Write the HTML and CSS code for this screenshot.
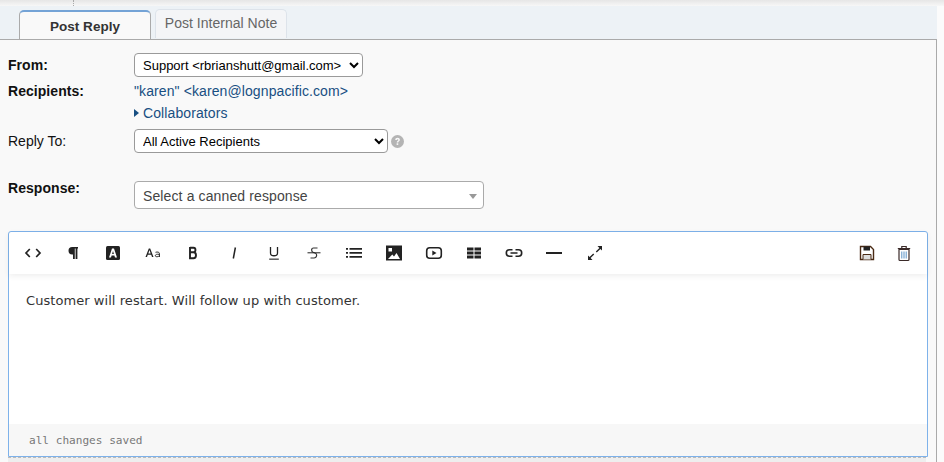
FILE: index.html
```html
<!DOCTYPE html>
<html lang="en">
<head>
<meta charset="utf-8">
<title>Post Reply</title>
<link rel="stylesheet" href="styles.css">
</head>
<body>
<div class="topstrip"><span class="grip"></span></div>
<div class="tabs">
  <div class="tab active">Post Reply</div>
  <div class="tab">Post Internal Note</div>
</div>
<main class="panel">
  <div class="row row-from">
    <label class="lbl strong">From:</label>
    <select class="sel sel-from"><option>Support &lt;rbrianshutt@gmail.com&gt;</option></select>
  </div>
  <div class="row row-rec">
    <label class="lbl strong">Recipients:</label>
    <div class="rec">
      <a class="link">"karen" &lt;karen@lognpacific.com&gt;</a>
      <a class="link collab"><span class="tri"></span>Collaborators</a>
    </div>
  </div>
  <div class="row row-reply">
    <label class="lbl">Reply To:</label>
    <select class="sel sel-reply"><option>All Active Recipients</option></select>
    <svg class="help" viewBox="0 0 24 24" width="13" height="13"><circle cx="12" cy="12" r="12" fill="#b4b4b4"/><path d="M7.800 9.200c0-2.400 1.900-3.900 4.300-3.900 2.500 0 4.300 1.500 4.300 3.600 0 3-3 2.900-3 5.100h-2.800c0-3.500 3-3.400 3-5 0-.7-.6-1.200-1.400-1.200-.9 0-1.500.6-1.500 1.500z" fill="#f9f9f9"/><rect x="10.400" y="15.300" width="3" height="3" fill="#f9f9f9"/></svg>
  </div>
  <div class="row row-resp">
    <label class="lbl strong">Response:</label>
    <div class="canned"><span>Select a canned response</span><i class="caret"></i></div>
  </div>
  <section class="editor">
    <div class="toolbar">
      <svg class="ic" viewBox="0 0 18 18"><path d="M5.800 5 2 9l3.800 4M12.200 5 16 9l-3.800 4" fill="none" stroke="#222" stroke-width="1.700"/></svg>
      <svg class="ic" viewBox="0 0 18 18"><path d="M14 3H8.200a3.700 3.700 0 0 0 0 7.400H9V15h1.800V4.500h.8V15H13.400V4.500H14z" fill="#222"/></svg>
      <svg class="ic" viewBox="0 0 18 18"><rect x="2" y="2" width="14" height="14" rx="1.500" fill="#222"/><path d="M5 13.500 8 4.500h2l3 9h-2l-.6-2H7.600L7 13.500zM8.100 10h1.800L9 7z" fill="#fff"/></svg>
      <svg class="ic" viewBox="0 0 18 18"><path d="M1.500 13 4.800 4.500h1.400L9.500 13H8l-.8-2.200H3.800L3 13zM4.300 9.500h2.400L5.500 6.100z" fill="#222"/><path d="M11.500 8.300c1.900-.6 4-.3 4 1.500V13M15.500 10.400c-2.800-.5-4.200.2-4.200 1.300 0 1.400 2.900 1.400 4.200-.1" fill="none" stroke="#333" stroke-width="1"/></svg>
      <svg class="ic" viewBox="0 0 18 18"><path d="M6 3.800h3.500c2.600 0 2.600 4.400 0 4.500H6M9.500 8.300c3.300 0 3.300 5.800 0 5.900H6V3" fill="none" stroke="#222" stroke-width="1.900"/></svg>
      <svg class="ic" viewBox="0 0 18 18"><path d="M10.400 3.500 8.300 14.500" fill="none" stroke="#222" stroke-width="1.500"/></svg>
      <svg class="ic" viewBox="0 0 18 18"><path d="M5.500 3v6.200c0 3.400 7 3.400 7 0V3" fill="none" stroke="#222" stroke-width="1.300"/><rect x="4.200" y="14.600" width="9.600" height="1.100" fill="#222"/></svg>
      <svg class="ic" viewBox="0 0 18 18"><path d="M12.500 4H8.500C6 4 6 8 8.500 8.500L10 9c2.500.6 2 5-1 5H5.500" fill="none" stroke="#333" stroke-width="1.200"/><rect x="2.500" y="8.300" width="13" height="1" fill="#222"/></svg>
      <svg class="ic" viewBox="0 0 18 18"><path d="M1 4h2v1.700H1zM1 8h2v1.700H1zM1 12h2v1.700H1zM4.500 4H17v1.700H4.500zM4.500 8H17v1.700H4.500zM4.500 12H17v1.700H4.500z" fill="#222"/></svg>
      <svg class="ic" viewBox="0 0 18 18"><path d="M1 1.500h16v15H1zM3.500 4v3.500H7V4zM3 15h12l-3.500-6-2.500 3.500-1.700-2z" fill="#222" fill-rule="evenodd"/></svg>
      <svg class="ic" viewBox="0 0 18 18"><rect x="1.700" y="3.700" width="14.600" height="10.600" rx="3" fill="none" stroke="#222" stroke-width="1.600"/><path d="M7.300 6.500 11.500 9l-4.200 2.500z" fill="#222"/></svg>
      <svg class="ic" viewBox="0 0 18 18"><path d="M2 3.500h6.500v3H2zM9.500 3.500H16v3H9.500zM2 7.500h6.500v3H2zM9.500 7.500H16v3H9.500zM2 11.500h6.500v3H2zM9.500 11.500H16v3H9.500z" fill="#222"/></svg>
      <svg class="ic" viewBox="0 0 18 18"><path d="M7.500 5.800h-3a3.200 3.200 0 0 0 0 6.400h3M10.500 5.800h3a3.200 3.200 0 0 1 0 6.400h-3M5.500 9h7" fill="none" stroke="#222" stroke-width="1.600"/></svg>
      <svg class="ic" viewBox="0 0 18 18"><rect x="1" y="8" width="16" height="2" fill="#222"/></svg>
      <svg class="ic" viewBox="0 0 18 18"><path d="M11.500 2H16v4.500l-1.600-1.600-3.600 3.600-1-1 3.600-3.600zM6.500 16H2v-4.500l1.600 1.600 3.600-3.600 1 1-3.600 3.600z" fill="#222"/></svg>
      <span class="spacer"></span>
      <svg class="ic ic-save" viewBox="0 0 18 18"><path d="M2.500 2.500h10l3 3v10h-13z" fill="none" stroke="#4a2a14" stroke-width="1.400"/><path d="M5.500 2.500h6.500v4H5.500z" fill="#222"/><path d="M5 15.500V10.500h8v5" fill="#ddd" stroke="#4a2a14" stroke-width="1"/></svg>
      <svg class="ic" viewBox="0 0 18 18"><path d="M4 5.500h10v10a1 1 0 0 1-1 1H5a1 1 0 0 1-1-1zM2.800 4.500h12.400M6.800 4V2.500h4.400V4" fill="none" stroke="#3a2a28" stroke-width="1.200"/><path d="M6.800 7.500v7M9 7.500v7M11.200 7.500v7" stroke="#5a94c8" stroke-width="1"/></svg>
    </div>
    <div class="body">Customer will restart. Will follow up with customer.</div>
    <div class="status">all changes saved</div>
  </section>
  <div class="dropzone"></div>
</main>
</body>
</html>
```
FILE: styles.css
```css
html,body{margin:0;padding:0;}
body{width:944px;height:462px;overflow:hidden;background:#fbfbfb;font-family:"Liberation Sans",Arial,sans-serif;font-size:14px;color:#000;}
.topstrip{height:6px;background:linear-gradient(#e6e6e6,#f7f7f7);position:relative;}
.grip{position:absolute;left:73px;top:0;height:6px;border-left:1px dotted #aaa;}
.tabs{height:33px;width:937px;display:flex;align-items:flex-end;padding-left:19px;gap:4px;box-sizing:border-box;background:#edf2f6;border-bottom:0;}
.tab{box-sizing:border-box;height:29px;width:132px;margin-bottom:1px;border:1px solid #dde3ea;border-bottom:0;border-radius:5px 5px 0 0;background:#f4f5f7;color:#666;text-align:center;font-size:14px;line-height:26px;letter-spacing:.02px;}
.tab.active{height:29px;margin-bottom:0;border:1px solid #aaa;border-top:2px solid #74a3d6;border-bottom:0;background:#f9f9f9;color:#333;font-size:13.5px;font-weight:bold;line-height:29px;position:relative;}
.panel{box-sizing:border-box;width:937px;height:423px;background:#f9f9f9;border-top:1px solid #aaa;border-right:1px solid #aaa;padding:13px 8px 0 8px;}
.row{display:flex;align-items:flex-start;}
.lbl{width:126px;flex:none;line-height:18px;color:#111;}
.strong{font-weight:bold;letter-spacing:.05px;}
.row-from{height:24px;}
.row-from .lbl{line-height:24px;}
.row-rec{margin-top:5px;height:47px;}
.row-reply{height:24px;}
.row-reply .lbl{line-height:24px;}
.row-resp{margin-top:28px;height:28px;}
.row-resp .lbl{margin-top:-2px;}
.sel{font-family:inherit;font-size:13px;height:24px;background:#fff;border:1px solid #9a9a9a;border-radius:4px;color:#000;padding:0 0 0 4px;}
.sel-from{width:229px;}
.sel-reply{width:254px;}
.help{margin:6px 0 0 3px;}
.rec{display:flex;flex-direction:column;gap:4px;}
.link{color:#184f82;line-height:18px;display:flex;align-items:center;letter-spacing:.1px;}
.tri{width:0;height:0;border-left:5px solid #184f82;border-top:4px solid transparent;border-bottom:4px solid transparent;margin-right:4px;}
.canned{box-sizing:border-box;width:350px;height:28px;background:#fff;border:1px solid #aaa;border-radius:4px;display:flex;align-items:center;justify-content:space-between;padding:2px 6px 0 8px;color:#444;letter-spacing:.12px;}
.caret{width:0;height:0;border-top:5px solid #999;border-left:4px solid transparent;border-right:4px solid transparent;}
.editor{box-sizing:border-box;margin-top:22px;width:920px;height:226px;background:#fff;border:1px solid #7eb2ea;border-radius:3px 3px 0 0;display:flex;flex-direction:column;}
.toolbar{height:42px;flex:none;display:flex;align-items:center;padding:0 14px 0 15px;gap:22.12px;box-shadow:0 2px 6px rgba(0,0,0,.07);}
.ic{width:18px;height:18px;flex:none;}
.ic-save{margin-right:-3px;}
.spacer{flex:1;}
.body{flex:1;padding:17px 17px 0;font-family:"DejaVu Sans",Verdana,sans-serif;font-size:13px;line-height:20px;letter-spacing:.06px;color:#333;}
.status{height:32px;flex:none;background:#f7f7f7;box-sizing:border-box;padding:10px 20px;font-family:"DejaVu Sans Mono",monospace;font-size:11.100px;line-height:14px;color:#777;}
.dropzone{width:918px;height:5px;box-sizing:border-box;background:#eee;border-top:1px dashed #bbb;}
```
